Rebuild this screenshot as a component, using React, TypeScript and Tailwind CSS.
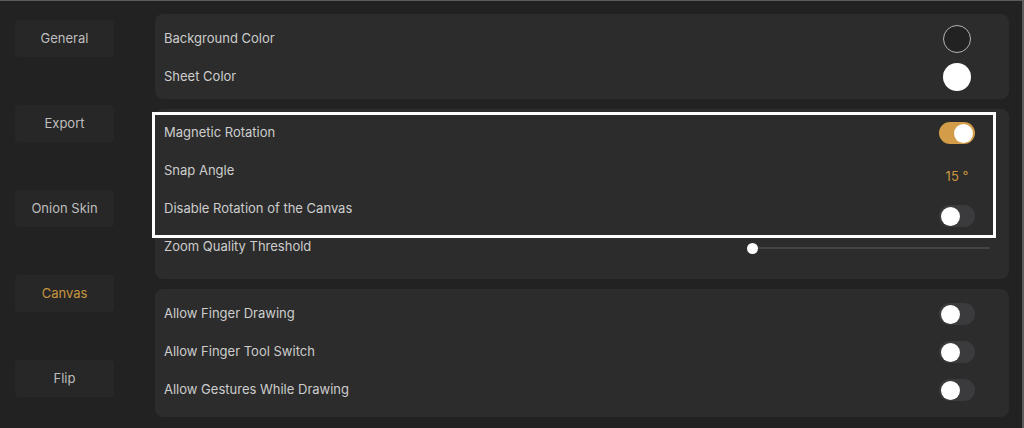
import React from "react";

const font = { fontFamily: "Inter, 'Noto Sans', sans-serif" };

function Toggle({ on, className = "" }: { on?: boolean; className?: string }) {
  return (
    <div
      className={`w-[36px] h-[22px] rounded-full flex items-center px-[2px] ${
        on ? "bg-[#d29c48] justify-end" : "bg-[#3b3b3d] justify-start"
      } ${className}`}
    >
      <div className="w-[19px] h-[19px] rounded-full bg-white" />
    </div>
  );
}

function Row({ label, children, slider }: { label: string; children?: React.ReactNode; slider?: boolean }) {
  return (
    <div className={`h-[38px] flex items-center justify-between pl-[9px] ${slider ? "pr-[19px]" : "pr-[34px]"}`}>
      <span className="text-[13px] text-[#cdcdcd]">{label}</span>
      {slider ? children : <div className="w-[36px] flex items-center justify-center">{children}</div>}
    </div>
  );
}

function SideButton({ label, active }: { label: string; active?: boolean }) {
  return (
    <div
      className={`w-[99px] h-[37px] rounded-[4px] bg-[#272727] flex items-center justify-center text-[13px] ${
        active ? "text-[#c8953f]" : "text-[#bebebe]"
      }`}
    >
      {label}
    </div>
  );
}

export default function App() {
  return (
    <div
      className="relative w-[1024px] h-[428px] bg-[#222222] flex border-t border-r-2 border-[#5c5c5c] overflow-hidden"
      style={font}
    >
      <div className="w-[155px] shrink-0 pl-[15px] pt-[19px] flex flex-col gap-[48px]">
        <SideButton label="General" />
        <SideButton label="Export" />
        <SideButton label="Onion Skin" />
        <SideButton label="Canvas" active />
        <SideButton label="Flip" />
      </div>
      <div className="w-[854px] pt-[13px] flex flex-col gap-[10px]">
        <div className="h-[85px] rounded-[8px] bg-[#2c2c2c] pt-[6px]">
          <Row label="Background Color">
            <div className="w-[28px] h-[28px] rounded-full border border-[#b4b4b4] bg-[#222222]" />
          </Row>
          <Row label="Sheet Color">
            <div className="w-[28px] h-[28px] rounded-full bg-white" />
          </Row>
        </div>
        <div className="h-[170px] rounded-[8px] bg-[#2c2c2c] pt-[5px]">
          <Row label="Magnetic Rotation">
            <Toggle on />
          </Row>
          <Row label="Snap Angle">
            <span className="mt-[12px] text-[13px] text-[#c99640] whitespace-nowrap">15 °</span>
          </Row>
          <Row label="Disable Rotation of the Canvas">
            <Toggle className="mt-[14px]" />
          </Row>
          <Row label="Zoom Quality Threshold" slider>
            <div className="relative w-[243px] h-[12px] flex items-center mt-[2px]">
              <div className="absolute left-[5px] right-0 h-[2px] bg-[#444446] rounded-full" />
              <div className="absolute left-0 w-[11px] h-[11px] rounded-full bg-white" />
            </div>
          </Row>
        </div>
        <div className="h-[128px] rounded-[8px] bg-[#2c2c2c] pt-[6px]">
          <Row label="Allow Finger Drawing">
            <Toggle />
          </Row>
          <Row label="Allow Finger Tool Switch">
            <Toggle />
          </Row>
          <Row label="Allow Gestures While Drawing">
            <Toggle />
          </Row>
        </div>
      </div>
      <div className="absolute left-[152px] top-[111px] w-[844px] h-[126px] border-[3px] border-white pointer-events-none" />
    </div>
  );
}
